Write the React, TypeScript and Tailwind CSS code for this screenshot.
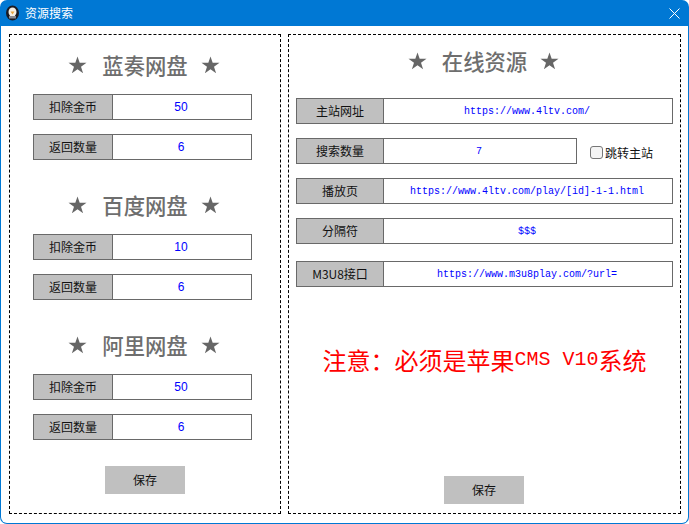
const cjk = '"Noto Sans CJK SC", sans-serif';

function Star() {
  return (
    <svg width="19" height="18" viewBox="0 0 20 19" className="shrink-0">
      <path d="M10 0.5 12.3 7.2H19.5L13.7 11.4 15.9 18.3 10 14 4.1 18.3 6.3 11.4 0.5 7.2H7.7Z" fill="#666666" />
    </svg>
  );
}

function Title({ text, className }: { text: string; className: string }) {
  return (
    <div className={`flex h-[24px] items-center justify-center pr-[2px] ${className}`}>
      <Star />
      <span
        className="ml-[15px] mr-[13px] text-[21.33px] font-medium leading-[24px] text-[#6e6e6e]"
        style={{ fontFamily: cjk }}
      >
        {text}
      </span>
      <Star />
    </div>
  );
}

function Row({
  label,
  value,
  mono = false,
  labelW,
  className = '',
}: {
  label: string;
  value: string;
  mono?: boolean;
  labelW: string;
  className?: string;
}) {
  return (
    <div className={`flex h-[26px] border border-[#696969] ${className}`}>
      <div
        className={`flex shrink-0 items-center justify-center border-r border-[#696969] bg-[#c0c0c0] text-[12px] text-[#111111] ${labelW}`}
        style={{ fontFamily: cjk }}
      >
        {label}
      </div>
      <div
        className={`flex flex-1 items-center justify-center bg-white pr-[2px] text-[#0000ff] ${
          mono ? 'text-[10px]' : 'text-[12px]'
        }`}
        style={{ fontFamily: mono ? '"Liberation Mono", monospace' : '"Liberation Sans", sans-serif' }}
      >
        {value}
      </div>
    </div>
  );
}

function SaveButton({ className }: { className: string }) {
  return (
    <div
      className={`flex h-[28px] w-[80px] items-center justify-center bg-[#c0c0c0] text-[12px] text-[#111111] ${className}`}
      style={{ fontFamily: cjk }}
    >
      保存
    </div>
  );
}

function LeftRows({ coins, count }: { coins: string; count: string }) {
  return (
    <>
      <Row label="扣除金币" value={coins} labelW="w-[79px]" className="ml-[23px] mt-[17px] w-[219px]" />
      <Row label="返回数量" value={count} labelW="w-[79px]" className="ml-[23px] mt-[14px] w-[219px]" />
    </>
  );
}

export default function App() {
  return (
    <div className="flex h-[524px] w-[689px] flex-col overflow-hidden rounded-[7px] bg-[#0078d4]">
      <div className="flex h-[26px] shrink-0 items-center pl-[5px] pr-[9px]">
        <svg width="15" height="16" viewBox="0 0 14 16" className="shrink-0">
          <ellipse cx="7" cy="8" rx="6.5" ry="7.5" fill="#1a1a22" />
          <ellipse cx="7" cy="7" rx="4" ry="4.5" fill="#f4efe6" />
          <path d="M5 6.5h4L7 9.5Z" fill="#e8a33a" />
          <rect x="3.5" y="11" width="7" height="2.5" fill="#8a8a90" />
        </svg>
        <span className="ml-[5px] flex-1 text-[12px] text-white" style={{ fontFamily: cjk }}>
          资源搜索
        </span>
        <svg width="11" height="11" viewBox="0 0 11 11" className="shrink-0">
          <path d="M0.5 0.5 10.5 10.5M10.5 0.5 0.5 10.5" stroke="white" strokeWidth="1" fill="none" />
        </svg>
      </div>
      <div className="mx-px mb-px flex flex-1 gap-[7px] rounded-b-[6px] bg-white pl-[8px] pr-[7px] pt-[8px] pb-[9px]">
        <div className="flex w-[272px] flex-col border border-dashed border-black">
          <Title text="蓝奏网盘" className="mt-[18px]" />
          <LeftRows coins="50" count="6" />
          <Title text="百度网盘" className="mt-[33px]" />
          <LeftRows coins="10" count="6" />
          <Title text="阿里网盘" className="mt-[33px]" />
          <LeftRows coins="50" count="6" />
          <SaveButton className="ml-[95px] mt-[26px]" />
        </div>
        <div className="flex flex-1 flex-col border border-dashed border-black">
          <Title text="在线资源" className="mt-[14px]" />
          <Row mono label="主站网址" value="https://www.4ltv.com/" labelW="w-[87px]" className="mx-[7px] mt-[25px]" />
          <div className="mx-[7px] mt-[14px] flex items-center">
            <Row mono label="搜索数量" value="7" labelW="w-[87px]" className="w-[281px]" />
            <div className="ml-[13px] mt-[3px] flex items-center">
              <span className="h-[13px] w-[13px] rounded-[3px] border border-[#767676] bg-[#f4f4f4]" />
              <span className="ml-[2px] text-[12px] text-[#111111]" style={{ fontFamily: cjk }}>
                跳转主站
              </span>
            </div>
          </div>
          <Row
            mono
            label="播放页"
            value="https://www.4ltv.com/play/[id]-1-1.html"
            labelW="w-[87px]"
            className="mx-[7px] mt-[14px]"
          />
          <Row mono label="分隔符" value="$$$" labelW="w-[87px]" className="mx-[7px] mt-[14px]" />
          <Row
            mono
            label="M3U8接口"
            value="https://www.m3u8play.com/?url="
            labelW="w-[87px]"
            className="mx-[7px] mt-[17px]"
          />
          <div
            className="mt-[56px] flex h-[34px] items-center justify-center text-[24px] text-[#ff0000]"
            style={{ fontFamily: cjk }}
          >
            注意：必须是苹果
            <span className="text-[20px]" style={{ fontFamily: '"Liberation Mono", monospace' }}>
              CMS V10
            </span>
            系统
          </div>
          <SaveButton className="ml-[155px] mt-[99px]" />
        </div>
      </div>
    </div>
  );
}
